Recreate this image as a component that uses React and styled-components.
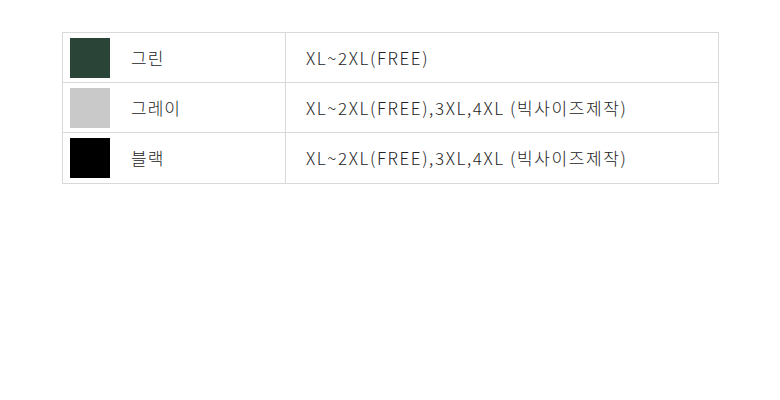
import React from "react";
import styled, { createGlobalStyle } from "styled-components";

const GlobalStyle = createGlobalStyle`
  body {
    margin: 0;
    background: #fff;
    font-family: "Noto Sans CJK KR", "Noto Sans", sans-serif;
  }
`;

const Page = styled.div`
  padding: 32px 0 0 62px;
`;

const Table = styled.div`
  width: 657px;
  box-sizing: border-box;
  border: 1px solid #d9d9d9;
  display: flex;
  flex-direction: column;
`;

const Row = styled.div`
  display: grid;
  grid-template-columns: 223px 1fr;
  height: ${({ last }) => (last ? "50px" : "49px")};
  border-bottom: ${({ last }) => (last ? "none" : "1px solid #d9d9d9")};
`;

const ColorCell = styled.div`
  display: flex;
  align-items: center;
  padding-left: 7px;
  border-right: 1px solid #d9d9d9;
`;

const Swatch = styled.div`
  width: 40px;
  height: 40px;
  background: ${({ color }) => color};
  margin-right: 21px;
`;

const Label = styled.span`
  font-size: 17px;
  font-weight: 300;
  color: #222;
  letter-spacing: 1px;
  margin-top: -1px;
`;

const SizeCell = styled.div`
  display: flex;
  align-items: center;
  padding-left: 20px;
  font-size: 17px;
  font-weight: 300;
  letter-spacing: 1.6px;
  color: #222;
  margin-top: -1px;
`;

const rows = [
  { name: "그린", color: "#2a4538", size: "XL~2XL(FREE)" },
  { name: "그레이", color: "#c9c9c9", size: "XL~2XL(FREE),3XL,4XL (빅사이즈제작)" },
  { name: "블랙", color: "#000", size: "XL~2XL(FREE),3XL,4XL (빅사이즈제작)" },
];

const App = () => (
  <>
    <GlobalStyle />
    <Page>
      <Table>
        {rows.map((r, i) => (
          <Row key={r.name} last={i === rows.length - 1}>
            <ColorCell>
              <Swatch color={r.color} />
              <Label>{r.name}</Label>
            </ColorCell>
            <SizeCell>{r.size}</SizeCell>
          </Row>
        ))}
      </Table>
    </Page>
  </>
);

export default App;
